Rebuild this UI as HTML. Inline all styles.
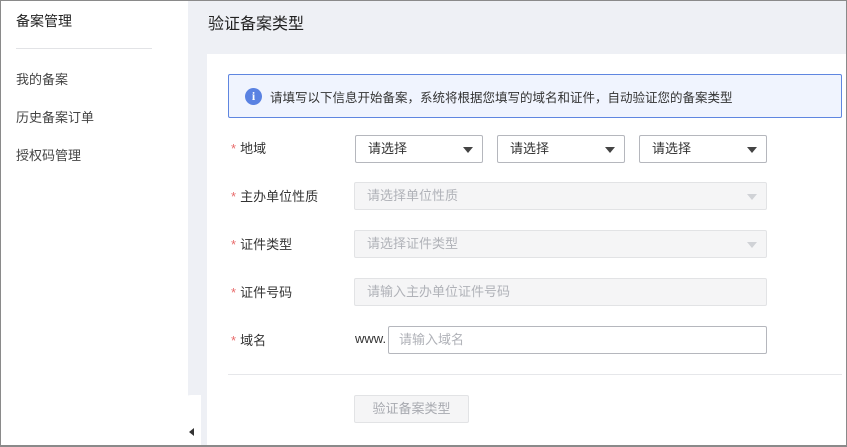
<!DOCTYPE html><html><head><meta charset="utf-8"><style>
*{box-sizing:border-box;margin:0;padding:0}
body{width:847px;height:447px;overflow:hidden;font-family:"Liberation Sans","Noto Sans CJK SC",sans-serif;font-size:12px;color:#333;position:relative;background:#eef0f5}
.frame{position:absolute;inset:0;border:1px solid #8a8a8a;border-bottom-width:2px;z-index:10;pointer-events:none}
.side{position:absolute;left:0;top:0;width:188px;height:447px;background:#fff}
.a{position:absolute}
.sel,.dis,.inp,.btn{position:absolute;border:1px solid #b5b7bd;border-radius:2px;background:#fff;height:28px;line-height:26px;padding-left:12px;font-size:13px}
.dis{background:#f5f5f6;border-color:#e2e3e5;color:#b0b2b8}
.arr{position:absolute;right:9px;top:11px;width:0;height:0;border-left:5px solid transparent;border-right:5px solid transparent;border-top:6px solid #444}
.dis .arr{border-top-color:#d0d2d6}
.lbl{position:absolute;left:231px;font-size:13px}
.lbl b{color:#e86a6a;font-weight:normal;margin-right:4px}
</style></head><body>
<div class="side">
<div class="a" style="left:16px;top:11px;font-size:14px;color:#222">备案管理</div>
<div class="a" style="left:16px;top:48px;width:136px;height:1px;background:#e2e3e6"></div>
<div class="a" style="left:16px;top:69px;font-size:13px;color:#444">我的备案</div>
<div class="a" style="left:16px;top:107px;font-size:13px;color:#444">历史备案订单</div>
<div class="a" style="left:16px;top:145px;font-size:13px;color:#444">授权码管理</div>
</div>
<div class="a" style="left:181px;top:395px;width:20px;height:52px;background:#fff;border-radius:10px 0 0 0"></div>
<div class="a" style="left:189px;top:428px;width:0;height:0;border-top:4px solid transparent;border-bottom:4px solid transparent;border-right:5px solid #333"></div>
<div class="a" style="left:208px;top:10px;font-size:16px;color:#222">验证备案类型</div>
<div class="a" style="left:207px;top:54px;width:640px;height:393px;background:#fff"></div>
<div class="a" style="left:228px;top:74px;width:614px;height:44px;background:#f0f4fe;border:1px solid #5f86e0;border-radius:2px"></div>
<div class="a" style="left:245px;top:88px;width:17px;height:17px;border-radius:50%;background:#5a82e2;color:#fff;font-weight:bold;font-size:12px;text-align:center;line-height:17px;font-family:'Liberation Serif',serif">i</div>
<div class="a" style="left:270px;top:87px;font-size:12.5px;color:#333">请填写以下信息开始备案，系统将根据您填写的域名和证件，自动验证您的备案类型</div>
<div class="lbl" style="top:138px"><b>*</b>地域</div>
<div class="sel" style="left:355px;top:135px;width:128px">请选择<i class="arr"></i></div>
<div class="sel" style="left:497px;top:135px;width:128px">请选择<i class="arr"></i></div>
<div class="sel" style="left:639px;top:135px;width:128px">请选择<i class="arr"></i></div>
<div class="lbl" style="top:186px"><b>*</b>主办单位性质</div>
<div class="dis" style="left:354px;top:182px;width:413px">请选择单位性质<i class="arr"></i></div>
<div class="lbl" style="top:234px"><b>*</b>证件类型</div>
<div class="dis" style="left:354px;top:230px;width:413px">请选择证件类型<i class="arr"></i></div>
<div class="lbl" style="top:282px"><b>*</b>证件号码</div>
<div class="dis" style="left:354px;top:278px;width:413px">请输入主办单位证件号码</div>
<div class="lbl" style="top:330px"><b>*</b>域名</div>
<div class="a" style="left:355px;top:331px;font-size:13px;color:#333">www.</div>
<div class="inp" style="left:388px;top:326px;width:379px;color:#b0b2b8;padding-left:10px">请输入域名</div>
<div class="a" style="left:228px;top:374px;width:614px;height:1px;background:#e6e7ea"></div>
<div class="dis" style="left:354px;top:395px;width:115px;text-align:center;padding-left:0;color:#a8aab0">验证备案类型</div>
<div class="frame"></div>
</body></html>
